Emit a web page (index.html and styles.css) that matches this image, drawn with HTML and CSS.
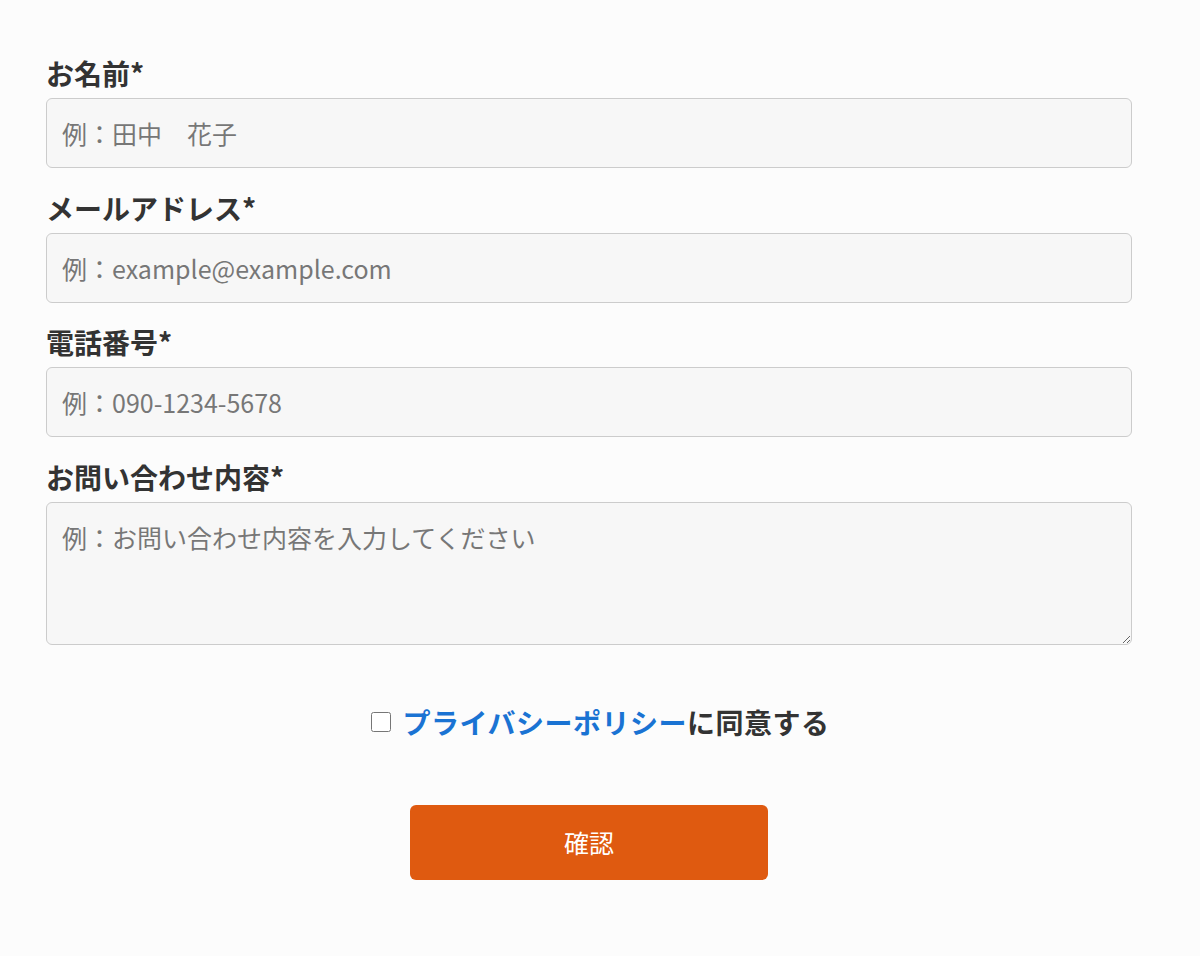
FILE: index.html
```html
<!DOCTYPE html>
<html lang="ja">
<head>
  <meta charset="UTF-8" />
  <meta name="viewport" content="width=device-width, initial-scale=1.0" />
  <title>お問い合わせ</title>
  <link rel="stylesheet" href="styles.css">
</head>
<body>

  <form class="contact-form">
    <div class="fields">
      <div class="field">
        <label for="name">お名前*</label>
        <input type="text" id="name" placeholder="例：田中　花子" />
      </div>

      <div class="field">
        <label for="email">メールアドレス*</label>
        <input type="email" id="email" placeholder="例：example@example.com" />
      </div>

      <div class="field">
        <label for="tel">電話番号*</label>
        <input type="tel" id="tel" placeholder="例：090-1234-5678" />
      </div>

      <div class="field">
        <label for="message">お問い合わせ内容*</label>
        <textarea id="message" placeholder="例：お問い合わせ内容を入力してください"></textarea>
      </div>
    </div>

    <div class="agree">
      <input type="checkbox" id="agree" />
      <label for="agree"><a href="#">プライバシーポリシー</a>に同意する</label>
    </div>

    <div class="actions">
      <button type="button" class="submit-btn">確認</button>
    </div>
  </form>

</body>
</html>
```

FILE: styles.css
```css
body {
  margin: 0;
  background: #fcfcfc;
  color: #333;
  font-family: "Noto Sans CJK JP", "Noto Sans", sans-serif;
}

.contact-form {
  padding-top: 53px;
}

.fields,
.actions {
  width: 1086px;
  margin-left: 46px;
}

.field {
  margin-bottom: 19.5px;
}

.field label {
  display: block;
  font-size: 28px;
  font-weight: bold;
  line-height: 40px;
  margin-bottom: 5px;
}

.field input,
.field textarea {
  display: block;
  box-sizing: border-box;
  width: 100%;
  height: 70px;
  padding: 0 15px;
  font-family: inherit;
  font-size: 25px;
  color: #333;
  background: #f7f7f7;
  border: 1px solid #ccc;
  border-radius: 6px;
}

.field textarea {
  height: 143px;
  padding: 16px 15px;
  line-height: 36px;
  resize: vertical;
}

.field input::placeholder,
.field textarea::placeholder {
  color: #777;
}

.agree {
  display: flex;
  justify-content: center;
  align-items: center;
  gap: 12px;
  margin-top: 57px;
  font-size: 28px;
  font-weight: bold;
  line-height: 40px;
  letter-spacing: 0.5px;
}

.agree input {
  width: 20px;
  height: 20px;
  margin: 0;
}

.agree a {
  color: #1a73d3;
  text-decoration: none;
}

.actions {
  display: flex;
  justify-content: center;
  margin-top: 63px;
}

.submit-btn {
  width: 358px;
  height: 75px;
  border: none;
  border-radius: 6px;
  background: #df5a10;
  color: #fff;
  font-family: inherit;
  font-size: 25px;
  cursor: pointer;
}
```
